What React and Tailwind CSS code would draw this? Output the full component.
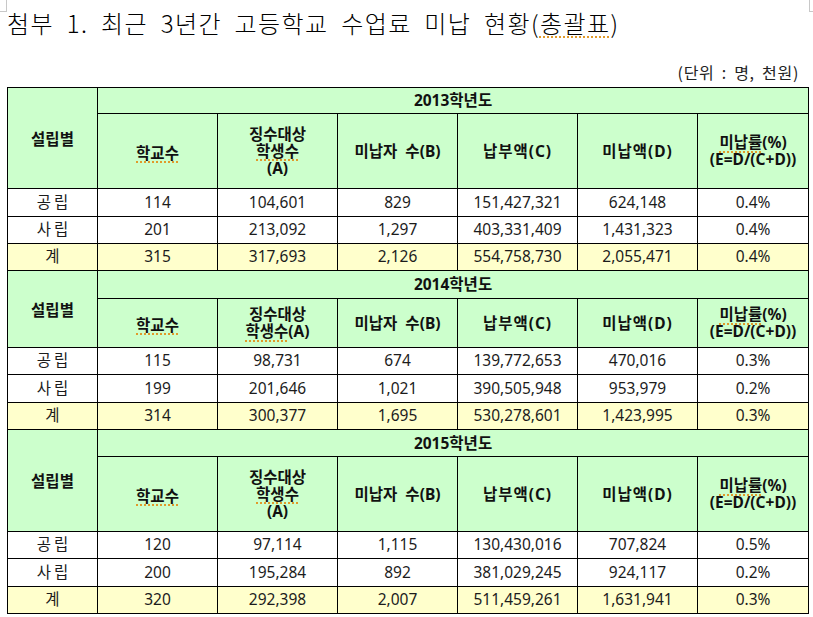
const blocks = [
  {
    year: "2013",
    yearH: "h-[26px]",
    headH: "h-[75px]",
    student: ["징수대상", "학생수", "(A)"],
    rows: [
      { h: "h-[28px]", cells: ["공립", "114", "104,601", "829", "151,427,321", "624,148", "0.4%"] },
      { h: "h-[27px]", cells: ["사립", "201", "213,092", "1,297", "403,331,409", "1,431,323", "0.4%"] },
      { h: "h-[27px]", cells: ["계", "315", "317,693", "2,126", "554,758,730", "2,055,471", "0.4%"], total: true },
    ],
  },
  {
    year: "2014",
    yearH: "h-[28px]",
    headH: "h-[49px]",
    student: ["징수대상", "학생수(A)"],
    rows: [
      { h: "h-[27px]", cells: ["공립", "115", "98,731", "674", "139,772,653", "470,016", "0.3%"] },
      { h: "h-[28px]", cells: ["사립", "199", "201,646", "1,021", "390,505,948", "953,979", "0.2%"] },
      { h: "h-[27px]", cells: ["계", "314", "300,377", "1,695", "530,278,601", "1,423,995", "0.3%"], total: true },
    ],
  },
  {
    year: "2015",
    yearH: "h-[27px]",
    headH: "h-[75px]",
    student: ["징수대상", "학생수", "(A)"],
    rows: [
      { h: "h-[27px]", cells: ["공립", "120", "97,114", "1,115", "130,430,016", "707,824", "0.5%"] },
      { h: "h-[28px]", cells: ["사립", "200", "195,284", "892", "381,029,245", "924,117", "0.2%"] },
      { h: "h-[27px]", cells: ["계", "320", "292,398", "2,007", "511,459,261", "1,631,941", "0.3%"], total: true },
    ],
  },
];

// spell-check squiggle from the word processor
function Squiggle({ children }) {
  return (
    <span className="underline decoration-dotted decoration-[#e09a2a] decoration-[1.5px] underline-offset-[3px]">
      {children}
    </span>
  );
}

function StudentHead({ lines }) {
  return (
    <>
      <div>{lines[0]}</div>
      {lines.length === 3 ? (
        <>
          <div><Squiggle>{lines[1]}</Squiggle></div>
          <div>{lines[2]}</div>
        </>
      ) : (
        <div>
          <Squiggle>학생수</Squiggle>(A)
        </div>
      )}
    </>
  );
}

function Block({ b }) {
  const th = "border border-black bg-[#ccffcc] text-center align-middle font-bold text-[15.5px] leading-[17px] text-[#111]";
  return (
    <>
      <tr className={b.yearH}>
        <td rowSpan={2} className={`${th} pt-[2px]`}>
          설립별
        </td>
        <td colSpan={6} className={th}>
          {b.year}학년도
        </td>
      </tr>
      <tr className={b.headH}>
        <td className={`${th} pt-[4px]`}>
          <Squiggle>학교수</Squiggle>
        </td>
        <td className={th}>
          <StudentHead lines={b.student} />
        </td>
        <td className={th}>미납자&nbsp; 수(B)</td>
        <td className={`${th} tracking-[1px]`}>납부액(C)</td>
        <td className={`${th} tracking-[1px]`}>미납액(D)</td>
        <td className={th}>
          <div>
            <Squiggle>미납률</Squiggle>(%)
          </div>
          <div>(E=D/(C+D))</div>
        </td>
      </tr>
      {b.rows.map((r) => (
        <tr key={r.cells[0]} className={`${r.h} ${r.total ? "bg-[#ffffcc]" : "bg-white"}`}>
          {r.cells.map((c, i) => (
            <td
              key={i}
              className={`border border-black text-center align-middle text-[15.5px] text-[#1c1c1c] ${
                i === 0 ? "tracking-[3px] pl-[3px]" : ""
              }`}
            >
              {c}
            </td>
          ))}
        </tr>
      ))}
    </>
  );
}

export default function App() {
  return (
    <div className="relative w-[813px] h-[617px] overflow-hidden bg-white font-['Noto_Sans','Noto_Sans_CJK_KR',sans-serif]">
      {/* page corner marks */}
      <div className="absolute left-0 top-0 w-[7px] h-[12px] border-r border-b border-[#c8c8c8]" />
      <div className="absolute right-0 top-0 w-[4px] h-[12px] border-l border-b border-[#c8c8c8]" />

      <h1 className="pl-[7px] pt-[6px] text-[24px] leading-[34px] font-light tracking-[1.4px] [word-spacing:6px] text-black font-['Noto_Sans_CJK_KR',serif]">
        첨부 1. 최근 3년간 고등학교 수업료 미납 현황(<Squiggle>총괄표</Squiggle>)
      </h1>

      <p className="mt-[22px] pr-[14px] text-right text-[16px] leading-[20px] tracking-[0.7px] [word-spacing:3px] text-[#222] font-['Noto_Sans_CJK_KR',sans-serif]">
        (단위 : 명, 천원)
      </p>

      <table className="ml-[7px] mt-[5px] table-fixed border-collapse w-[801px]">
        <colgroup>
          <col className="w-[90px]" />
          <col className="w-[120px]" />
          <col className="w-[120px]" />
          <col className="w-[120px]" />
          <col className="w-[120px]" />
          <col className="w-[120px]" />
          <col className="w-[111px]" />
        </colgroup>
        <tbody>
          {blocks.map((b) => (
            <Block key={b.year} b={b} />
          ))}
        </tbody>
      </table>
    </div>
  );
}
